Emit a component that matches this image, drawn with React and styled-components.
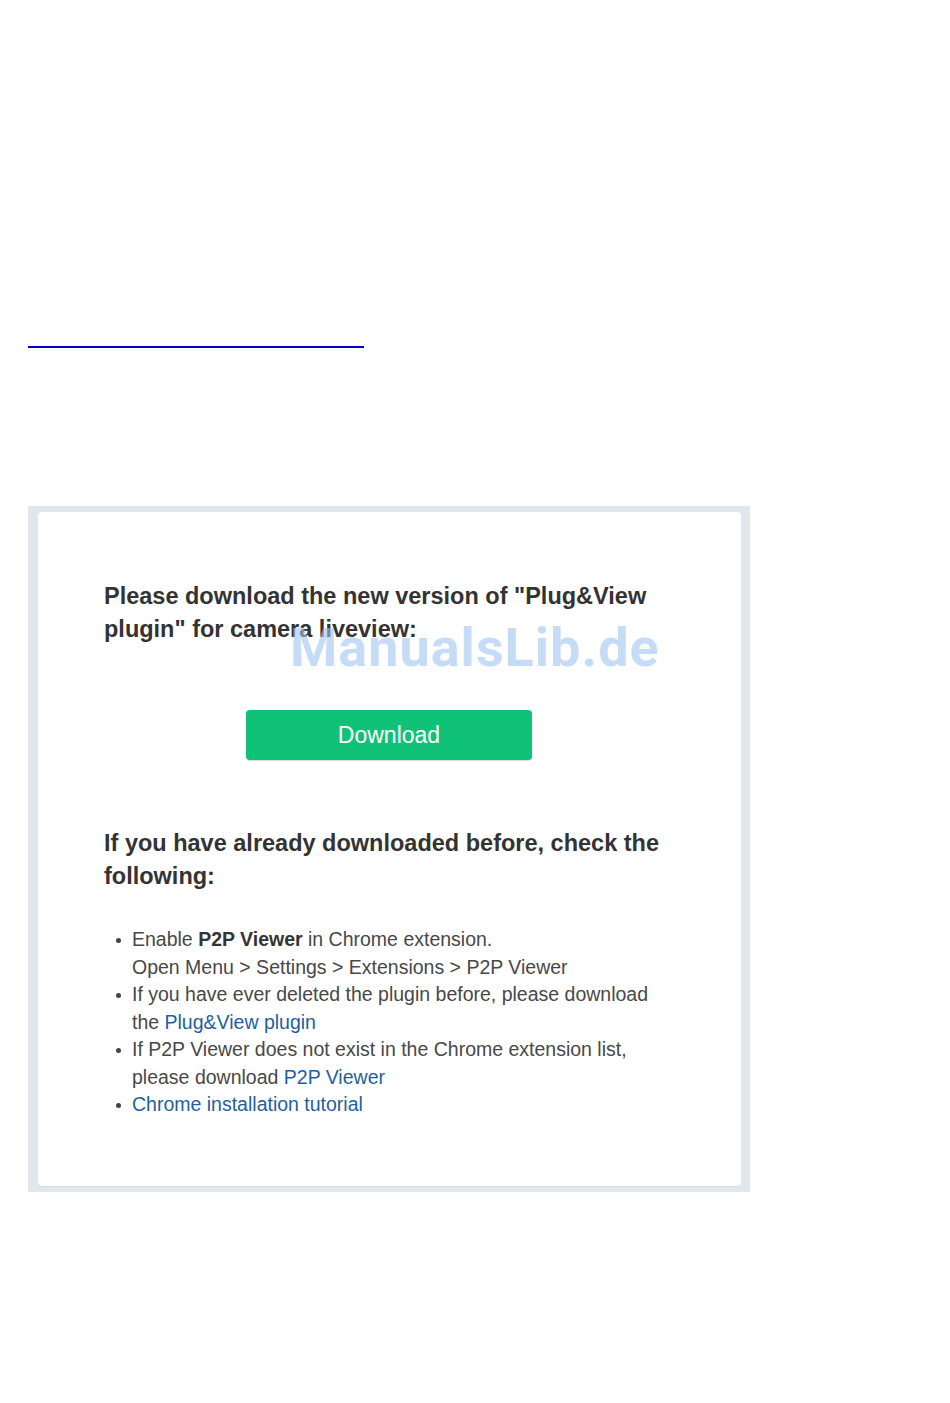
import { createGlobalStyle, styled } from 'styled-components';

const GlobalStyle = createGlobalStyle`
	html, body {
		margin: 0;
		padding: 0;
		background: #fff;
	}
	body {
		font-family: 'Liberation Sans', Arial, sans-serif;
	}
`;

function App() {
	return (
		<Page>
			<GlobalStyle />
			<TopLink href="#" />
			<Panel>
				<Card>
					<Heading>
						Please download the new version of "Plug&amp;View plugin" for camera liveview:
					</Heading>
					<ButtonRow>
						<DownloadButton>Download</DownloadButton>
					</ButtonRow>
					<Heading>If you have already downloaded before, check the following:</Heading>
					<List>
						<Item>
							Enable <strong>P2P Viewer</strong> in Chrome extension.
							<br />
							Open Menu &gt; Settings &gt; Extensions &gt; P2P Viewer
						</Item>
						<Item>
							If you have ever deleted the plugin before, please download the{' '}
							<Link href="#">Plug&amp;View plugin</Link>
						</Item>
						<Item>
							If P2P Viewer does not exist in the Chrome extension list, please download{' '}
							<Link href="#">P2P Viewer</Link>
						</Item>
						<Item>
							<Link href="#">Chrome installation tutorial</Link>
						</Item>
					</List>
					<Watermark>ManualsLib.de</Watermark>
				</Card>
			</Panel>
		</Page>
	);
}

export default App;

const Page = styled.div`
	padding: 346px 28px 212px;
	display: flex;
	flex-direction: column;
	align-items: flex-start;
`;

const TopLink = styled.a`
	display: block;
	width: 336px;
	height: 2px;
	background: #0000cc;
`;

const Panel = styled.div`
	margin-top: 158px;
	width: 722px;
	box-sizing: border-box;
	padding: 6px 9px 6px 10px;
	background: #e1e7ea;
`;

const Card = styled.div`
	position: relative;
	background: #fff;
	border-radius: 4px;
	padding: 68px 66px 67px;
	box-shadow: 0 1px 1px rgba(0, 0, 0, 0.04);
`;

const Heading = styled.h2`
	margin: 0;
	color: #333;
	font-size: 23.5px;
	font-weight: 700;
	line-height: 33px;
	max-width: 575px;
`;

const ButtonRow = styled.div`
	display: flex;
	justify-content: center;
	padding: 64px 0 67px;
	width: 570px;
`;

const DownloadButton = styled.button`
	width: 286px;
	height: 50px;
	border: none;
	border-radius: 4px;
	background: #10c277;
	box-shadow: 0 1px 1px rgba(0, 0, 0, 0.15);
	color: #fff;
	font-family: 'Liberation Sans', Arial, sans-serif;
	font-size: 23px;
	cursor: pointer;
`;

const List = styled.ul`
	margin: 33px 0 0;
	padding-left: 28px;
	color: #484848;
	font-size: 19.5px;
	line-height: 27.5px;
	max-width: 530px;

	strong {
		color: #333;
	}
`;

const Item = styled.li`
	list-style: none;
	position: relative;

	&::before {
		content: '';
		position: absolute;
		left: -16px;
		top: 12px;
		width: 5px;
		height: 5px;
		border-radius: 50%;
		background: #444;
	}
`;

const Link = styled.a`
	color: #1f5f9f;
	text-decoration: none;
`;

const Watermark = styled.div`
	position: absolute;
	left: 252px;
	top: 104px;
	color: rgba(160, 196, 240, 0.6);
	font-family: Roboto, 'Liberation Sans', sans-serif;
	font-size: 54px;
	font-weight: 700;
	letter-spacing: 1px;
	pointer-events: none;
`;
